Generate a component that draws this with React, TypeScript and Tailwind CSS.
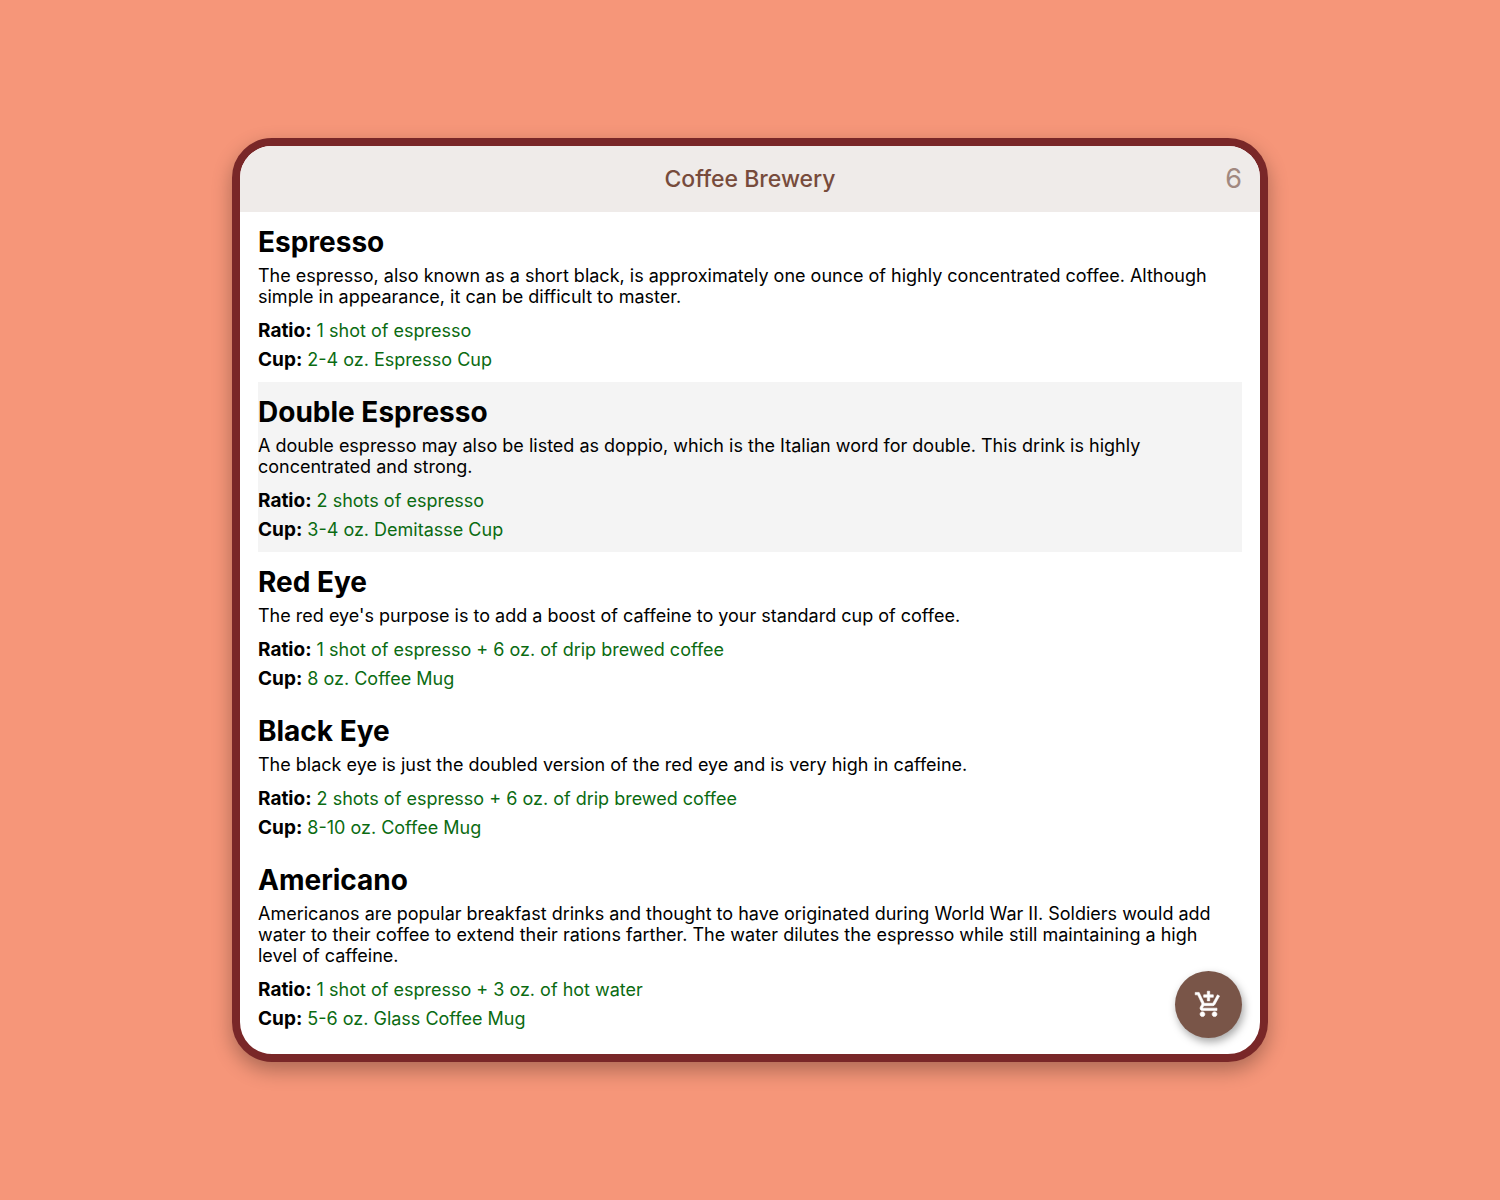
const drinks = [
  {
    name: "Espresso",
    text: "The espresso, also known as a short black, is approximately one ounce of highly concentrated coffee. Although simple in appearance, it can be difficult to master.",
    ratio: "1 shot of espresso",
    cup: "2-4 oz. Espresso Cup",
  },
  {
    name: "Double Espresso",
    text: "A double espresso may also be listed as doppio, which is the Italian word for double. This drink is highly concentrated and strong.",
    ratio: "2 shots of espresso",
    cup: "3-4 oz. Demitasse Cup",
    active: true,
  },
  {
    name: "Red Eye",
    text: "The red eye's purpose is to add a boost of caffeine to your standard cup of coffee.",
    ratio: "1 shot of espresso + 6 oz. of drip brewed coffee",
    cup: "8 oz. Coffee Mug",
  },
  {
    name: "Black Eye",
    text: "The black eye is just the doubled version of the red eye and is very high in caffeine.",
    ratio: "2 shots of espresso + 6 oz. of drip brewed coffee",
    cup: "8-10 oz. Coffee Mug",
  },
  {
    name: "Americano",
    text: "Americanos are popular breakfast drinks and thought to have originated during World War II. Soldiers would add water to their coffee to extend their rations farther. The water dilutes the espresso while still maintaining a high level of caffeine.",
    ratio: "1 shot of espresso + 3 oz. of hot water",
    cup: "5-6 oz. Glass Coffee Mug",
  },
];

function Fact({ label, value }: { label: string; value: string }) {
  return (
    <p className="text-[18px] leading-[29px] text-[#0b6b12]">
      <strong className="text-[19px] text-black">{label}:</strong> {value}
    </p>
  );
}

function CartIcon() {
  return (
    <svg
      viewBox="0 0 24 24"
      aria-hidden="true"
      className="size-[29px] fill-current stroke-current [stroke-width:0.5]"
    >
      <path d="M11 9h2V6h3V4h-3V1h-2v3H8v2h3v3zm-4 9c-1.1 0-1.99.9-1.99 2S5.9 22 7 22s2-.9 2-2-.9-2-2-2zm10 0c-1.1 0-1.99.9-1.99 2s.89 2 1.99 2 2-.9 2-2-.9-2-2-2zm-9.83-3.25.03-.12.9-1.63h7.45c.75 0 1.41-.41 1.75-1.03l3.86-7.01L19.42 4h-.01l-1.1 2-2.76 5H8.53l-.13-.27L6.16 6l-.95-2-.94-2H1v2h2l3.6 7.59-1.35 2.45c-.16.28-.25.61-.25.96 0 1.1.9 2 2 2h12v-2H7.42c-.13 0-.25-.11-.25-.25z" />
    </svg>
  );
}

export default function App() {
  return (
    <div className="flex min-h-screen items-center justify-center bg-[#f69679] px-6 py-12 font-['Inter',sans-serif] text-black">
      <main className="relative w-full max-w-[1036px] overflow-hidden rounded-[40px] border-8 border-[#792728] bg-white shadow-[0_8px_20px_rgba(0,0,0,0.3)]">
        <header className="grid grid-cols-[1fr_auto_1fr] items-center bg-[#efebe9] px-[18px] py-4 text-[#774b3c]">
          <h1 className="col-start-2 text-[23px] leading-[34px] font-medium">Coffee Brewery</h1>
          <span className="text-right text-[27px] leading-[34px] text-[#a1887f]">6</span>
        </header>
        <ul className="px-[18px] pb-[13px]">
          {drinks.map((d) => (
            <li key={d.name} className={d.active ? "bg-[#f4f4f4] pt-3 pb-2" : "pt-3 pb-2"}>
              <h2 className="text-[28px] leading-9 font-bold">{d.name}</h2>
              <p className="mt-[5px] mb-[9px] pr-3 text-[18px] leading-[21px]">{d.text}</p>
              <Fact label="Ratio" value={d.ratio} />
              <Fact label="Cup" value={d.cup} />
            </li>
          ))}
        </ul>
        <button
          type="button"
          aria-label="Add to cart"
          className="absolute right-[18px] bottom-4 flex size-[67px] items-center justify-center rounded-full bg-[#795548] text-white shadow-[2px_4px_8px_rgba(0,0,0,0.35)]"
        >
          <CartIcon />
        </button>
      </main>
    </div>
  );
}
